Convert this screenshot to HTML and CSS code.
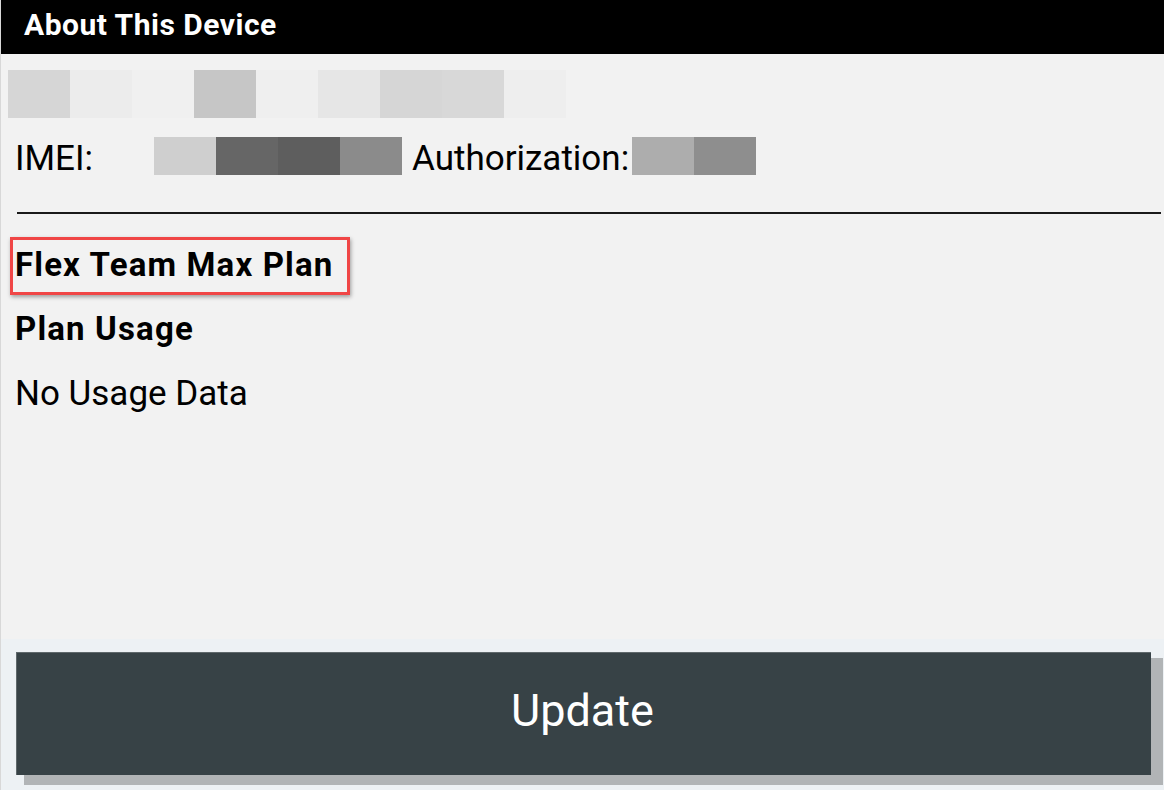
FILE: index.html
```html
<!DOCTYPE html>
<html lang="en">
<head>
<meta charset="utf-8">
<title>About This Device</title>
<link rel="stylesheet" href="styles.css">
</head>
<body>
<div class="app">
  <header class="header">About This Device</header>
  <main class="content">
    <div class="redacted redacted-top">
      <span class="px c1"></span><span class="px c2"></span><span class="px c3"></span><span class="px c4"></span><span class="px c5"></span><span class="px c6"></span><span class="px c7"></span><span class="px c8"></span><span class="px c9"></span>
    </div>
    <div class="id-row">
      <span class="label imei">IMEI:</span>
      <span class="redacted redacted-line">
        <span class="px d1"></span><span class="px d2"></span><span class="px d3"></span><span class="px d4"></span>
      </span>
      <span class="label auth">Authorization:</span>
      <span class="redacted redacted-line">
        <span class="px e1"></span><span class="px e2"></span>
      </span>
    </div>
    <hr class="separator">
    <h2 class="plan-name">Flex Team Max Plan</h2>
    <h3 class="plan-usage">Plan Usage</h3>
    <p class="usage-data">No Usage Data</p>
  </main>
  <footer class="footer">
    <button class="update-btn" type="button">Update</button>
  </footer>
</div>
</body>
</html>
```

FILE: styles.css
```css
* {
  box-sizing: border-box;
}

html, body {
  margin: 0;
  padding: 0;
}

body {
  background: #f2f2f2;
  font-family: Roboto, "Liberation Sans", sans-serif;
  color: #000;
}

.app {
  height: 790px;
  display: flex;
  flex-direction: column;
  border-left: 1px solid #d8d8d8;
  background: #f2f2f2;
}

.header {
  flex: none;
  height: 54px;
  background: #000;
  color: #fff;
  font-weight: 700;
  font-size: 30px;
  letter-spacing: 0.5px;
  line-height: 33px;
  padding: 8px 23px 0;
}

.content {
  flex: 1;
  padding: 16px 3px 0 0;
}

.redacted {
  display: flex;
}

.redacted-top {
  margin-left: 7px;
  height: 48px;
}

.redacted-top .px {
  width: 62px;
  height: 48px;
}

.px {
  display: block;
  flex: none;
}

.c1 { background: #d6d6d6; }
.c2 { background: #ececec; }
.c3 { background: #f0f0f0; }
.c4 { background: #c6c6c6; }
.c5 { background: #efefef; }
.c6 { background: #e6e6e6; }
.c7 { background: #d6d6d6; }
.c8 { background: #d8d8d8; }
.c9 { background: #eeeeee; }

.id-row {
  display: flex;
  align-items: flex-start;
  margin-top: 19px;
  height: 38px;
  padding-left: 14px;
}

.label {
  font-size: 35px;
  line-height: 38px;
  padding-top: 3px;
  white-space: nowrap;
}

.imei {
  width: 139px;
}

.auth {
  margin-left: 10px;
  margin-right: 3px;
}

.redacted-line .px {
  width: 62px;
  height: 38px;
}

.d1 { background: #cfcfcf; }
.d2 { background: #666666; }
.d3 { background: #5e5e5e; }
.d4 { background: #8b8b8b; }
.e1 { background: #adadad; }
.e2 { background: #8e8e8e; }

.separator {
  margin: 37px 0 0 16px;
  border: 0;
  height: 2px;
  background: #1a1a1a;
}

.plan-name,
.plan-usage {
  margin: 0;
  font-size: 33px;
  font-weight: 700;
  letter-spacing: 1.15px;
  line-height: 40px;
  padding-left: 14px;
}

.plan-name {
  position: relative;
  margin-top: 31px;
  width: max-content;
}

.plan-name::after {
  content: "";
  position: absolute;
  left: 9px;
  top: -8px;
  width: 334px;
  height: 52px;
  border: 3px solid #f04646;
  box-shadow: 1px 2px 4px rgba(0, 0, 0, 0.35);
}

.plan-usage {
  margin-top: 24px;
}

.usage-data {
  margin: 25px 0 0;
  padding-left: 14px;
  font-size: 35px;
  line-height: 40px;
}

.footer {
  flex: none;
  height: 151px;
  background: #edf1f4;
  padding: 13px 13px 0 15px;
}

.update-btn {
  display: block;
  width: 100%;
  height: 123px;
  border: 0;
  border-top: 1px solid #5f686b;
  border-left: 1px solid #5f686b;
  background: #374246;
  color: #fff;
  font-family: Roboto, "Liberation Sans", sans-serif;
  font-size: 45px;
  font-weight: 400;
  padding: 0 3px 7px 0;
  box-shadow: 10px 8px 0 2px #b1b4b6;
}
```
